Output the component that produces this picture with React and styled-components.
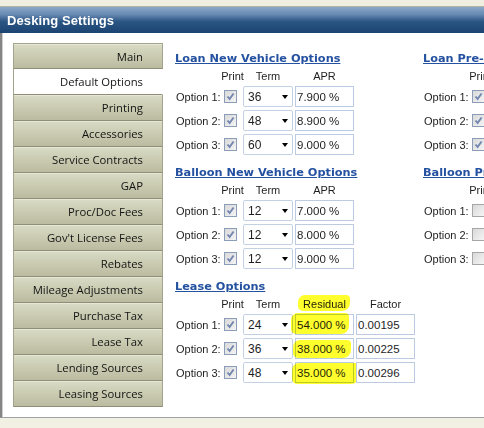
import React from 'react';
import styled, { createGlobalStyle } from 'styled-components';

const Global = createGlobalStyle`
  html, body {
    margin: 0;
    padding: 0;
    background: #f1f0e2;
    font-family: "Liberation Sans", Arial, sans-serif;
  }
  #root {
    width: 484px;
    height: 428px;
    overflow: hidden;
  }
`;

const Page = styled.div`
  width: 484px;
  height: 428px;
  display: flex;
  flex-direction: column;
  overflow: hidden;
`;

const TopStrip = styled.div`
  height: 6px;
  flex-shrink: 0;
  background: #efeee0;
  border-bottom: 1px solid #b4b4a6;
`;

const TitleBar = styled.div`
  height: 26px;
  flex-shrink: 0;
  display: flex;
  align-items: center;
  padding-left: 7px;
  background: linear-gradient(to bottom, #8ba7c7 0%, #6688b1 30%, #2b5684 55%, #1b4371 100%);
  color: #ffffff;
  font-weight: bold;
  font-size: 13px;
  letter-spacing: 0.1px;
`;

const Body = styled.div`
  height: 374px;
  flex-shrink: 0;
  display: flex;
  gap: 12px;
  padding: 10px 0 0 11px;
  background: #ffffff;
  border-left: 2px solid #858585;
  box-shadow: inset 1px 0 0 #cfcfcf;
  border-bottom: 1px solid #a2a2a2;
  box-sizing: content-box;
  overflow: hidden;
`;

const Footer = styled.div`
  flex: 1;
  background: #f1f0e2;
`;

const Sidebar = styled.div`
  width: 150px;
  flex-shrink: 0;
  display: flex;
  flex-direction: column;
`;

const Tab = styled.div`
  height: 25px;
  box-sizing: content-box;
  display: flex;
  align-items: center;
  justify-content: flex-end;
  padding-right: 19px;
  font-family: "Open Sans", "Liberation Sans", sans-serif;
  font-size: 11.3px;
  color: #141414;
  border-left: 1px solid #a3a48c;
  border-right: 1px solid ${(p) => (p.$active ? '#ffffff' : '#a3a48c')};
  border-bottom: 1px solid #8e8f76;
  background: ${(p) =>
    p.$active ? '#ffffff' : 'linear-gradient(to bottom, #dadbc6 0%, #cdceb5 40%, #babb9f 100%)'};
  box-shadow: ${(p) => (p.$active ? 'none' : 'inset 0 1px 0 #e6e7d6')};
  &:first-child {
    border-top: 1px solid #a3a48c;
    height: 24px;
  }
`;

const Content = styled.div`
  display: flex;
  gap: 8px;
  padding-top: 9px;
`;

const Column = styled.div`
  width: 240px;
  flex-shrink: 0;
  display: flex;
  flex-direction: column;
  gap: 11px;
`;

const Section = styled.div`
  display: flex;
  flex-direction: column;
  gap: 3px;
`;

const Heading = styled.div`
  font-family: "DejaVu Sans", Verdana, sans-serif;
  font-weight: bold;
  font-size: 11.3px;
  line-height: 14px;
  color: #2451a0;
  text-decoration: underline;
  white-space: nowrap;
`;

const Grid = styled.div`
  display: grid;
  grid-template-columns: 46px 17px 50px 59px ${(p) => (p.$factor ? '59px' : '')};
  grid-template-rows: 14px repeat(3, 21px);
  column-gap: 2px;
  row-gap: 3px;
  margin-left: 1px;
  font-size: 11px;
  color: #1e1e1e;
`;

const ColHead = styled.div`
  position: relative;
  display: flex;
  align-items: center;
  justify-content: center;
  white-space: nowrap;
`;

const Label = styled.div`
  display: flex;
  align-items: center;
  white-space: nowrap;
`;

const CheckCell = styled.div`
  display: flex;
  align-items: center;
`;

const Box = styled.div`
  width: 11px;
  height: 11px;
  border: 1px solid ${(p) => (p.$checked ? '#8c9dba' : '#a7a7a7')};
  background: linear-gradient(135deg, #d9d9d9 0%, #f4f4f4 100%);
  display: flex;
  align-items: center;
  justify-content: center;
`;

const Select = styled.div`
  position: relative;
  display: flex;
  align-items: center;
  padding-left: 4px;
  border: 1px solid #c4d1e4;
  border-radius: 2px;
  background: #ffffff;
  font-size: 12px;
  &::after {
    content: '';
    position: absolute;
    right: 4px;
    top: 8px;
    border-left: 3.5px solid transparent;
    border-right: 3.5px solid transparent;
    border-top: 4px solid #000000;
  }
`;

const Field = styled.div`
  position: relative;
  display: flex;
  align-items: center;
  padding-left: 1px;
  border: 1px solid #bccbe2;
  background: #ffffff;
  font-size: 11.5px;
  white-space: nowrap;
`;

const Marker = styled.span`
  position: absolute;
  background: #ffff2e;
  mix-blend-mode: multiply;
  pointer-events: none;
  border-radius: 7px 4px 8px 5px;
`;

const Check = ({ checked }) => (
  <CheckCell>
    <Box $checked={checked}>
      {checked && (
        <svg width="9" height="9" viewBox="0 0 9 9">
          <path d="M1.5 4.5 L3.6 7 L7.6 1.5" stroke="#7286b0" strokeWidth="1.9" fill="none" />
        </svg>
      )}
    </Box>
  </CheckCell>
);

const mark = (m) =>
  m ? <Marker style={{ left: m[0], top: m[1], width: m[2], height: m[3] }} /> : null;

const OptionSection = ({ title, rows, third, checked = true, factor, headMark }) => (
  <Section>
    <Heading>{title}</Heading>
    <Grid $factor={factor}>
      <div />
      <ColHead>Print</ColHead>
      <ColHead>Term</ColHead>
      <ColHead>
        {mark(headMark)}
        {third}
      </ColHead>
      {factor && <ColHead>Factor</ColHead>}
      {rows.map((r, i) => (
        <React.Fragment key={i}>
          <Label>Option {i + 1}:</Label>
          <Check checked={checked} />
          <Select>{r.term}</Select>
          <Field>
            {mark(r.mark)}
            {r.value}
          </Field>
          {factor && <Field>{r.factor}</Field>}
        </React.Fragment>
      ))}
    </Grid>
  </Section>
);

const tabs = [
  'Main',
  'Default Options',
  'Printing',
  'Accessories',
  'Service Contracts',
  'GAP',
  'Proc/Doc Fees',
  "Gov't License Fees",
  'Rebates',
  'Mileage Adjustments',
  'Purchase Tax',
  'Lease Tax',
  'Lending Sources',
  'Leasing Sources',
];

const loanNew = [
  { term: '36', value: '7.900 %' },
  { term: '48', value: '8.900 %' },
  { term: '60', value: '9.000 %' },
];

const balloonNew = [
  { term: '12', value: '7.000 %' },
  { term: '12', value: '8.000 %' },
  { term: '12', value: '9.000 %' },
];

const lease = [
  { term: '24', value: '54.000 %', factor: '0.00195', mark: [-5, -2, 58, 21] },
  { term: '36', value: '38.000 %', factor: '0.00225', mark: [-3, 1, 58, 18] },
  { term: '48', value: '35.000 %', factor: '0.00296', mark: [-4, 0, 67, 21] },
];

const loanUsed = [
  { term: '36', value: '8.900 %' },
  { term: '48', value: '9.900 %' },
  { term: '60', value: '10.000 %' },
];

const balloonUsed = [
  { term: '12', value: '8.000 %' },
  { term: '12', value: '9.000 %' },
  { term: '12', value: '10.000 %' },
];

export default function App() {
  return (
    <Page>
      <Global />
      <TopStrip />
      <TitleBar>Desking Settings</TitleBar>
      <Body>
        <Sidebar>
          {tabs.map((t) => (
            <Tab key={t} $active={t === 'Default Options'}>
              {t}
            </Tab>
          ))}
        </Sidebar>
        <Content>
          <Column>
            <OptionSection title="Loan New Vehicle Options" third="APR" rows={loanNew} />
            <OptionSection title="Balloon New Vehicle Options" third="APR" rows={balloonNew} />
            <OptionSection
              title="Lease Options"
              third="Residual"
              rows={lease}
              factor
              headMark={[3, -2, 52, 16]}
            />
          </Column>
          <Column>
            <OptionSection title="Loan Pre-Owned Vehicle Options" third="APR" rows={loanUsed} />
            <OptionSection
              title="Balloon Pre-Owned Vehicle Options"
              third="APR"
              rows={balloonUsed}
              checked={false}
            />
          </Column>
        </Content>
      </Body>
      <Footer />
    </Page>
  );
}
